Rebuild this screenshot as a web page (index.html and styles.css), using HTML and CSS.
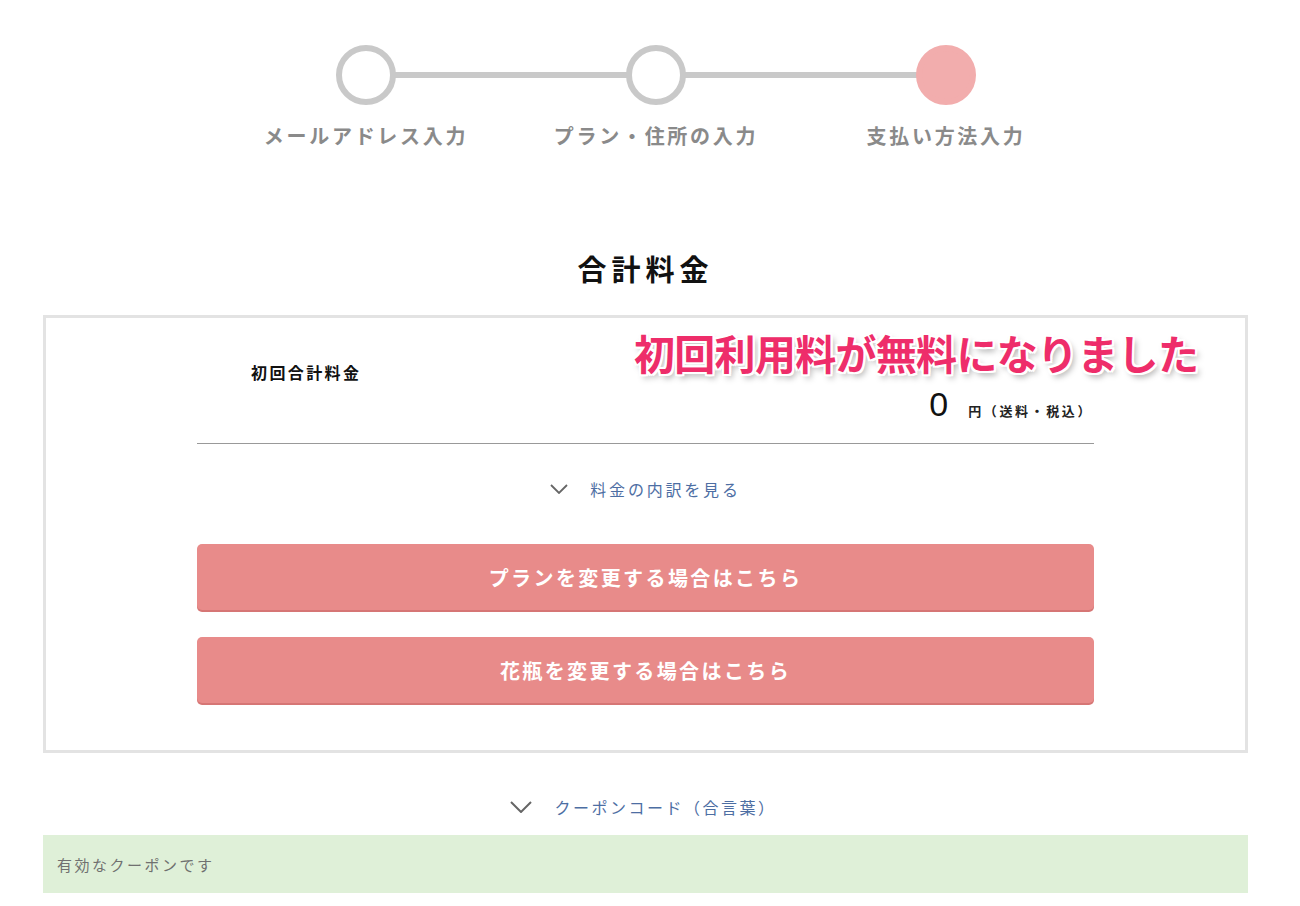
FILE: index.html
```html
<!DOCTYPE html>
<html lang="ja">
<head>
<meta charset="utf-8">
<title>支払い方法入力</title>
<link rel="stylesheet" href="styles.css">
</head>
<body>
<div class="page">
  <ol class="steps">
    <li class="step"><span class="dot"></span><span class="step-label">メールアドレス入力</span></li>
    <li class="step"><span class="dot"></span><span class="step-label">プラン・住所の入力</span></li>
    <li class="step current"><span class="dot"></span><span class="step-label">支払い方法入力</span></li>
  </ol>

  <h2 class="title">合計料金</h2>

  <section class="card">
    <p class="promo">初回利用料が無料になりました</p>
    <div class="inner">
      <div class="total-label">初回合計料金</div>
      <div class="total-amount"><span class="num">0</span><span class="unit">円（送料・税込）</span></div>
      <div class="toggle">
        <svg class="chev" width="18" height="10" viewBox="0 0 18 10"><polyline points="1,1 9,9 17,1" fill="none" stroke="#666" stroke-width="1.8"/></svg>
        <span>料金の内訳を見る</span>
      </div>
      <div class="buttons">
        <a class="btn">プランを変更する場合はこちら</a>
        <a class="btn">花瓶を変更する場合はこちら</a>
      </div>
    </div>
  </section>

  <div class="toggle coupon">
    <svg class="chev" width="22" height="12" viewBox="0 0 22 12"><polyline points="1,1 11,11 21,1" fill="none" stroke="#666" stroke-width="2"/></svg>
    <span>クーポンコード（合言葉）</span>
  </div>

  <div class="alert">有効なクーポンです</div>
</div>
</body>
</html>
```

FILE: styles.css
```css
* { box-sizing: border-box; }
html, body { margin: 0; padding: 0; background: #fff; }
body {
  font-family: "Noto Sans CJK JP", "Noto Sans", sans-serif;
  color: #222;
}
.page {
  width: 1205px;
  margin: 0 0 0 43px;
  padding-top: 45px;
}
.steps {
  list-style: none;
  margin: 0 0 0 178px;
  padding: 0;
  width: 870px;
  display: grid;
  grid-template-columns: repeat(3, 290px);
}
.step {
  position: relative;
  display: flex;
  flex-direction: column;
  align-items: center;
}
.step + .step::before {
  content: "";
  position: absolute;
  left: -145px;
  width: 290px;
  top: 27px;
  height: 6px;
  background: #c9c9c9;
  z-index: 0;
}
.dot {
  position: relative;
  z-index: 1;
  width: 60px;
  height: 60px;
  border-radius: 50%;
  border: 6px solid #c9c9c9;
  background: #fff;
}
.current .dot {
  background: #f2adad;
  border-color: #f2adad;
}
.step-label {
  margin-top: 17px;
  font-size: 20px;
  line-height: 28px;
  font-weight: 700;
  color: #8a8a8a;
  letter-spacing: 2.7px;
  white-space: nowrap;
}
.title {
  margin: 98px 0 0;
  text-align: center;
  font-size: 29px;
  line-height: 40px;
  font-weight: 700;
  letter-spacing: 5px;
  color: #111;
}
.card {
  position: relative;
  margin-top: 27px;
  border: 3px solid #e3e3e3;
  padding: 0 151px 47px;
}
.promo {
  position: absolute;
  left: 588px;
  top: 8px;
  margin: 0;
  font-size: 41px;
  line-height: 52px;
  font-weight: 700;
  color: #ee2d6a;
  letter-spacing: -0.7px;
  white-space: nowrap;
  text-shadow:
    -2px -2px 0 #fff, 2px -2px 0 #fff, -2px 2px 0 #fff, 2px 2px 0 #fff,
    0 -2px 0 #fff, 0 2px 0 #fff, -2px 0 0 #fff, 2px 0 0 #fff,
    3px 4px 6px rgba(0,0,0,0.35);
}
.inner {
  display: flex;
  flex-direction: column;
}
.total-label {
  margin-top: 43px;
  padding-left: 54px;
  font-size: 16px;
  line-height: 22px;
  font-weight: 700;
  letter-spacing: 2.4px;
  color: #111;
}
.total-amount {
  display: flex;
  justify-content: flex-end;
  align-items: baseline;
  padding: 3px 1px 0 0;
  height: 61px;
  border-bottom: 1px solid #999;
}
.num {
  font-family: "Liberation Sans", "Noto Sans", sans-serif;
  font-size: 34px;
  line-height: 36px;
  color: #111;
  margin-right: 20px;
}
.unit {
  font-size: 13px;
  font-weight: 700;
  letter-spacing: 2.6px;
  color: #222;
}
.toggle {
  display: flex;
  justify-content: center;
  align-items: center;
  gap: 22px;
  margin-top: 33px;
  height: 24px;
  font-size: 16px;
  letter-spacing: 2.8px;
  color: #4d6ea3;
}
.buttons {
  display: flex;
  flex-direction: column;
  gap: 27px;
  margin-top: 43px;
}
.btn {
  display: flex;
  justify-content: center;
  align-items: center;
  height: 66px;
  border-radius: 5px;
  background: #e88b8a;
  box-shadow: 0 2px 0 #d67675;
  color: #fff;
  font-size: 20px;
  font-weight: 700;
  letter-spacing: 2.4px;
  text-decoration: none;
}
.coupon {
  margin-top: 42px;
  gap: 22px;
  letter-spacing: 2.5px;
  padding-right: 4px;
}
.alert {
  margin-top: 16px;
  height: 58px;
  background: #dff0d8;
  padding: 0 14px;
  display: flex;
  align-items: center;
  font-size: 15px;
  letter-spacing: 2.5px;
  color: #707070;
}
```
